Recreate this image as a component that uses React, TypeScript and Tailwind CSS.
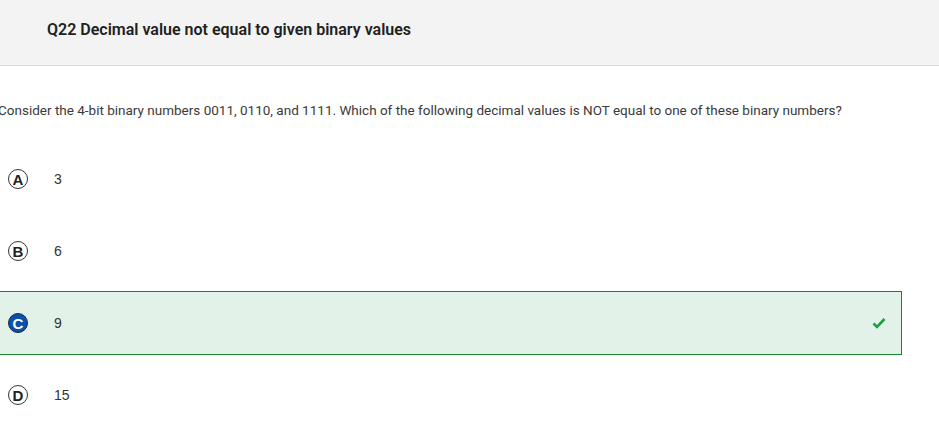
import React from "react";

const options = [
  { letter: "A", value: "3", correct: false },
  { letter: "B", value: "6", correct: false },
  { letter: "C", value: "9", correct: true },
  { letter: "D", value: "15", correct: false },
];

export default function App() {
  return (
    <div className="w-[939px] h-[432px] overflow-hidden bg-white" style={{ fontFamily: "Roboto, 'Liberation Sans', sans-serif" }}>
      <div className="h-[66px] bg-[#f3f3f3] border-b border-[#d9d9d9] flex items-center pl-[47px]">
        <h1 className="text-[16px] font-semibold text-[#212121] leading-5 -mt-[6px]">
          Q22 Decimal value not equal to given binary values
        </h1>
      </div>
      <div className="-ml-[10px] w-[912px]">
        <p className="pt-[34px] pl-[8px] text-[13.5px] leading-5 text-[#3a3a3a]">
          Consider the 4-bit binary numbers 0011, 0110, and 1111. Which of the following decimal values is NOT equal to one of these binary numbers?
        </p>
        <div className="mt-[27px] flex flex-col gap-[8px]">
          {options.map((o) => (
            <div
              key={o.letter}
              className={
                "h-[64px] flex items-center pl-[17px] pr-[15px] " +
                (o.correct ? "bg-[#e3f2e8] border border-[#15862c]" : "border border-transparent")
              }
            >
              <div
                className={
                  "w-[20px] h-[20px] rounded-full flex items-center justify-center text-[15px] font-bold leading-none " +
                  (o.correct ? "bg-[#0a50ad] border border-[#1d2a44] text-white" : "border border-[#333] text-[#222]")
                }
                style={{ fontFamily: "'Liberation Sans', Arial, sans-serif" }}
              >
                {o.letter}
              </div>
              <span
                className="ml-[26px] text-[14px] text-[#333]"
                style={{ fontFamily: "'Liberation Sans', Arial, sans-serif" }}
              >
                {o.value}
              </span>
              {o.correct && (
                <svg className="ml-auto" width="14" height="12" viewBox="0 0 14 12">
                  <path d="M1.5 6.5 L5 10 L12.5 2" fill="none" stroke="#1aa043" strokeWidth="2.6" strokeLinecap="butt" strokeLinejoin="miter" />
                </svg>
              )}
            </div>
          ))}
        </div>
      </div>
    </div>
  );
}
